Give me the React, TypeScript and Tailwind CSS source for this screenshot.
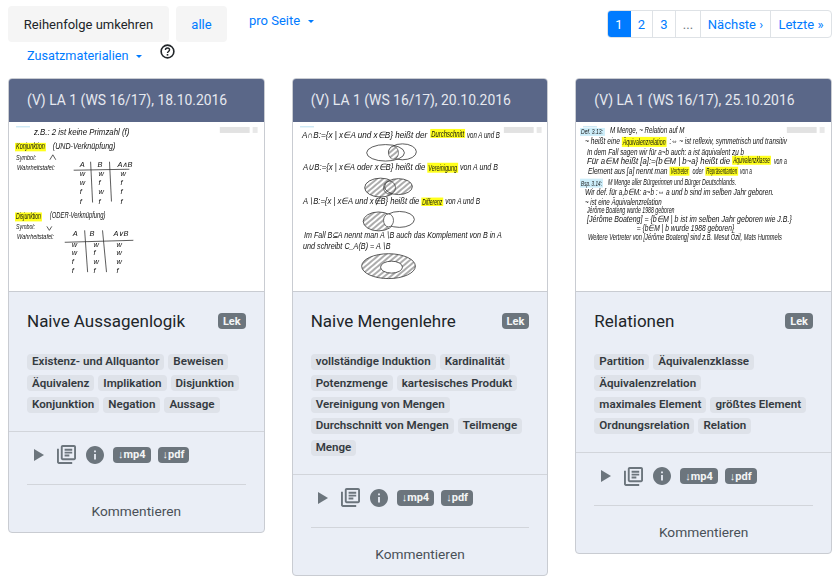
import React from 'react';

const Hand = ({ x, y, w, size = 9, children }: { x: number; y: number; w?: number; size?: number; children: React.ReactNode }) => (
  <text
    x={x}
    y={y}
    fontSize={size}
    fontStyle="italic"
    fontFamily="'Liberation Sans', sans-serif"
    fill="#111"
    textLength={w}
    lengthAdjust={w ? 'spacingAndGlyphs' : undefined}
  >
    {children}
  </text>
);

const Mark = ({ x, y, w, h, fill = '#ffff1a' }: { x: number; y: number; w: number; h: number; fill?: string }) => (
  <rect x={x} y={y} width={w} height={h} fill={fill} />
);

const WindowBar = ({ x = 212 }: { x?: number }) => (
  <g>
    <rect x={x} y={5} width={30} height={6} fill="#e2e2e2" />
    <rect x={x + 33} y={5} width={5} height={6} fill="#e8e8e8" />
    <rect x={7} y={4} width={14} height={1.5} fill="#cfe9f5" />
  </g>
);

const Rows = ({ cols, ys, rows }: { cols: number[]; ys: number[]; rows: string[][] }) => (
  <g>
    {rows.map((r, i) =>
      r.map((c, j) => (
        <Hand key={`${i}-${j}`} x={cols[j]} y={ys[i]} size={7.500}>
          {c}
        </Hand>
      )),
    )}
  </g>
);

const Thumb1 = () => (
  <>
    <Hand x={25} y={13} w={96}>z.B.: 2 ist keine Primzahl (f)</Hand>
    <Mark x={6} y={21} w={31} h={8.500} />
    <Hand x={7} y={27.500} w={29}>Konjunktion</Hand>
    <Hand x={44} y={27} w={63}>(UND-Verknüpfung)</Hand>
    <Hand x={7} y={38} w={20} size={8}>Symbol:</Hand>
    <path d="M41 38l3-5 3 5" stroke="#333" fill="none" strokeWidth="0.8" />
    <Hand x={8} y={48} w={38} size={8}>Wahrheitstafel:</Hand>
    <Rows cols={[71, 89, 109]} ys={[45]} rows={[['A', 'B', 'A∧B']]} />
    <path d="M65 48.500L121 47.500M82 40L84 81M101 40L103 80" stroke="#333" strokeWidth="0.8" fill="none" />
    <Rows
      cols={[71, 90, 112]}
      ys={[54, 63, 72, 82]}
      rows={[['w', 'w', 'w'], ['w', 'f', 'f'], ['f', 'w', 'f'], ['f', 'f', 'f']]}
    />
    <Mark x={6} y={91} w={27} h={9} />
    <Hand x={7} y={98} w={25}>Disjunktion</Hand>
    <Hand x={41} y={97} w={56}>(ODER-Verknüpfung)</Hand>
    <Hand x={7} y={108} w={19} size={8}>Symbol:</Hand>
    <path d="M38 105l2.500 4 2.500-4" stroke="#333" fill="none" strokeWidth="0.8" />
    <Hand x={8} y={118} w={37} size={8}>Wahrheitstafel:</Hand>
    <Rows cols={[64, 81, 105]} ys={[115]} rows={[['A', 'B', 'A∨B']]} />
    <path d="M56 121L125 119M76 109L79 151M94 109L98 151" stroke="#333" strokeWidth="0.8" fill="none" />
    <Rows
      cols={[63, 85, 108]}
      ys={[126, 134, 143, 152]}
      rows={[['w', 'w', 'w'], ['w', 'f', 'w'], ['f', 'w', 'w'], ['f', 'f', 'f']]}
    />
  </>
);

const Thumb2 = () => (
  <>
    <defs>
      <pattern id="hatch" width="4" height="4" patternUnits="userSpaceOnUse" patternTransform="rotate(-40)">
        <rect width="4" height="4" fill="#fff" />
        <path d="M0 2H4" stroke="#444" strokeWidth="0.9" />
      </pattern>
    </defs>
    <Mark x={138} y={7} w={35} h={9} />
    <Hand x={9} y={16} w={126}>A∩B:={'{'}x | x∈A und x∈B{'}'} heißt der</Hand>
    <Hand x={139} y={15} w={33}>Durchschnitt</Hand>
    <Hand x={175} y={16} w={33}>von A und B</Hand>
    <ellipse cx={93} cy={31} rx={19} ry={8.300} fill="none" stroke="#333" strokeWidth="0.8" />
    <ellipse cx={110} cy={30} rx={14} ry={8} fill="none" stroke="#333" strokeWidth="0.8" />
    <ellipse cx={101} cy={31} rx={5} ry={6.500} fill="url(#hatch)" stroke="#333" strokeWidth="0.6" />
    <Mark x={135} y={41} w={31} h={10} />
    <Hand x={10} y={48} w={123}>A∪B:={'{'}x | x∈A oder x∈B{'}'} heißt die</Hand>
    <Hand x={136} y={49} w={29}>Vereinigung</Hand>
    <Hand x={168} y={48} w={38}>von A und B</Hand>
    <ellipse cx={88} cy={66} rx={16} ry={9.500} fill="url(#hatch)" stroke="#333" strokeWidth="0.8" />
    <ellipse cx={106} cy={65} rx={14} ry={8} fill="url(#hatch)" stroke="#333" strokeWidth="0.8" />
    <ellipse cx={97} cy={66} rx={6} ry={6.500} fill="none" stroke="#333" strokeWidth="0.7" />
    <Mark x={129} y={76} w={22} h={8.500} />
    <Hand x={10} y={82} w={117}>A∖B:={'{'}x | x∈A und x∉B{'}'} heißt die</Hand>
    <Hand x={130} y={83} w={20}>Differenz</Hand>
    <Hand x={153} y={82} w={35}>von A und B</Hand>
    <ellipse cx={86} cy={100} rx={15.500} ry={9.500} fill="url(#hatch)" stroke="#333" strokeWidth="0.8" />
    <ellipse cx={107} cy={98} rx={15} ry={8} fill="#fff" stroke="#333" strokeWidth="0.8" />
    <ellipse cx={96} cy={99} rx={5} ry={6.500} fill="#fff" stroke="#333" strokeWidth="0.7" />
    <Hand x={11} y={117} w={199}>Im Fall B⊆A nennt man A∖B auch das Komplement von B in A</Hand>
    <Hand x={10} y={128} w={88}>und schreibt  C_A(B) = A∖B</Hand>
    <ellipse cx={96} cy={145} rx={27} ry={12.500} fill="url(#hatch)" stroke="#333" strokeWidth="0.8" />
    <ellipse cx={99} cy={146} rx={11} ry={6} fill="#fff" stroke="#333" strokeWidth="0.8" />
  </>
);

const Thumb3 = () => (
  <>
    <Mark x={4} y={6} w={25} h={8} fill="#cdeefa" />
    <Hand x={5} y={12.500} w={22} size={8}>Def. 3.13:</Hand>
    <Hand x={34} y={11} w={75}>M Menge, ~ Relation auf M</Hand>
    <Mark x={46} y={15} w={45} h={10} />
    <Hand x={9} y={22} w={35}>~ heißt eine</Hand>
    <Hand x={47} y={23} w={43}>Äquivalenzrelation</Hand>
    <Hand x={94} y={22} w={118}>:⇔ ~ ist reflexiv, symmetrisch und transitiv</Hand>
    <Hand x={11} y={33} w={158}>In dem Fall sagen wir für a~b auch: a ist äquivalent zu b</Hand>
    <Mark x={157} y={34} w={39} h={9} />
    <Hand x={11} y={42} w={144}>Für a∈M heißt [a]:={'{'}b∈M | b~a{'}'} heißt die</Hand>
    <Hand x={158} y={41} w={37}>Äquivalenzklasse</Hand>
    <Hand x={199} y={42} w={13}>von a</Hand>
    <Mark x={94} y={45} w={20} h={9} />
    <Mark x={130} y={45} w={33} h={9} />
    <Hand x={12} y={52} w={80}>Element aus [a] nennt man</Hand>
    <Hand x={95} y={52} w={18}>Vertreter</Hand>
    <Hand x={117} y={52} w={11}>oder</Hand>
    <Hand x={131} y={52} w={31}>Repräsentanten</Hand>
    <Hand x={165} y={52} w={12}>von a</Hand>
    <Mark x={4} y={57} w={23} h={9} fill="#cdeefa" />
    <Hand x={5} y={64} w={21} size={8}>Bsp. 3.14:</Hand>
    <Hand x={32} y={63} w={129}>M Menge aller Bürgerinnen und Bürger Deutschlands.</Hand>
    <Hand x={9} y={73} w={190}>Wir def. für a,b∈M: a~b :⇔ a und b sind im selben Jahr geboren.</Hand>
    <Hand x={9} y={83} w={77}>~ ist eine Äquivalenzrelation</Hand>
    <Hand x={11} y={92} w={88}>Jérôme Boateng wurde 1988 geboren</Hand>
    <Hand x={11} y={101} w={206}>[Jérôme Boateng] = {'{'}b∈M | b ist im selben Jahr geboren wie J.B.{'}'}</Hand>
    <Hand x={61} y={110} w={98}>= {'{'}b∈M | b wurde 1988 geboren{'}'}</Hand>
    <Hand x={12} y={119} w={195}>Weitere Vertreter von [Jérôme Boateng] sind z.B. Mesut Özil, Mats Hummels</Hand>
  </>
);

const Badge = ({ children }: { children: React.ReactNode }) => (
  <span className="flex h-[16px] items-center rounded-[4px] bg-[#6c757d] px-[5px] text-[11px] leading-none font-bold text-[#f4f5f6]">
    {children}
  </span>
);

const Tag = ({ children }: { children: string }) => (
  <span className="flex h-[16px] items-center rounded-[4px] bg-[#dee2e9] px-[5px] text-[11.6px] leading-none font-semibold whitespace-nowrap text-[#343a40]">
    {children}
  </span>
);

const Card = ({ title, heading, tags, thumb }: { title: string; heading: string; tags: string[]; thumb: React.ReactNode }) => (
  <div className="overflow-hidden rounded-[4px] border border-[#c9ccd2] bg-[#eaeef6]">
    <div className="flex h-[43px] items-center bg-[#5a6788] px-[18px] text-[13.9px] text-[#e6e9f0]">{title}</div>
    <svg viewBox="0 0 256 170" className="block h-[170px] w-full border-b border-[#c9ccd2] bg-white">
      <g filter="url(#soft)">
        {thumb}
        <WindowBar />
      </g>
    </svg>
    <div className="border-b border-[#d2d5db] px-[18px] pt-[18px] pb-[18px]">
      <div className="flex items-start justify-between">
        <h5 className="text-[17px] leading-[22px] text-[#212529]">{heading}</h5>
        <span className="mt-[3px]">
          <Badge>Lek</Badge>
        </span>
      </div>
      <div className="mt-[22px] flex flex-wrap gap-x-[4px] gap-y-[5.4px]">
        {tags.map((t) => (
          <Tag key={t}>{t}</Tag>
        ))}
      </div>
    </div>
    <div className="px-[18px] pt-[14px]">
      <div className="flex h-[18px] items-center text-[#6c757d]">
        <svg viewBox="0 0 10 12" className="ml-[7px] h-[12px] w-[10px]" fill="currentColor">
          <path d="M0 0l10 6-10 6z" />
        </svg>
        <svg viewBox="2 2 20 20" className="ml-[13px] h-[19px] w-[19px]" fill="currentColor">
          <path d="M4 6H2v14c0 1.100.9 2 2 2h14v-2H4V6zm16-4H8c-1.100 0-2 .9-2 2v12c0 1.100.9 2 2 2h12c1.100 0 2-.9 2-2V4c0-1.100-.9-2-2-2zm0 14H8V4h12v12zM10 9h8v2h-8zm0 3h5v2h-5zm0-6h8v2h-8z" />
        </svg>
        <svg viewBox="2 2 20 20" className="ml-[10px] h-[18px] w-[18px]" fill="currentColor">
          <path d="M12 2C6.480 2 2 6.480 2 12s4.480 10 10 10 10-4.480 10-10S17.520 2 12 2zm1 15h-2v-6h2v6zm0-8h-2V7h2v2z" />
        </svg>
        <span className="ml-[9px] flex gap-[7px]">
          <Badge>↓mp4</Badge>
          <Badge>↓pdf</Badge>
        </span>
      </div>
      <div className="mt-[20px] border-t border-[#d2d5db] pt-[16px] pb-[11px] text-center text-[13.7px] leading-[20px] text-[#495057]">
        Kommentieren
      </div>
    </div>
  </div>
);

const Caret = () => (
  <span className="ml-[8px] inline-block h-0 w-0 border-x-[3px] border-t-[3px] border-x-transparent border-t-[#007bff] align-[2px]" />
);

export default function App() {
  return (
    <div className='h-[582px] w-[840px] overflow-hidden bg-white font-["Roboto",sans-serif] text-[13px]'>
      <svg width="0" height="0" className="absolute">
        <filter id="soft">
          <feGaussianBlur stdDeviation="0.4" />
        </filter>
      </svg>

      <div className="flex h-[78px] justify-between px-[8px]">
        <div>
          <div className="flex pt-[6px]">
            <button className="h-[36px] w-[161px] rounded-[4px] bg-[#f5f5f5] pt-[1px] text-[#212529]">Reihenfolge umkehren</button>
            <button className="ml-[7px] h-[36px] w-[51px] rounded-[4px] bg-[#f5f5f5] pt-[1px] text-[#007bff]">alle</button>
            <span className="ml-[22px] pt-[5px] leading-[20px] text-[#007bff]">
              pro Seite
              <Caret />
            </span>
          </div>
          <div className="flex pt-[4px] pl-[19px] text-[12.7px] leading-[20px] text-[#007bff]">
            <span>
              Zusatzmaterialien
              <Caret />
            </span>
            <svg viewBox="0 0 16 16" className="mt-[-2px] ml-[18px] h-[15px] w-[15px] text-[#212529]" fill="none" stroke="currentColor">
              <circle cx="8" cy="8" r="6.800" strokeWidth="1.700" />
              <path d="M5.800 6.300c0-1.300 1-2.100 2.200-2.100s2.200.8 2.200 2c0 1.800-2.200 1.700-2.200 3.300" strokeWidth="1.500" />
              <path d="M8 10.700v1.700" strokeWidth="1.700" />
            </svg>
          </div>
        </div>
        <div className="mt-[10px] flex h-[28px] overflow-hidden rounded-[4px] border border-[#dee2e6] text-[#007bff]">
          <span className="-my-[1px] -ml-[1px] flex w-[24px] items-center justify-center bg-[#007bff] pt-[1px] text-white">1</span>
          <span className="flex w-[22px] items-center justify-center border-r border-[#dee2e6] pt-[1px]">2</span>
          <span className="flex w-[23px] items-center justify-center border-r border-[#dee2e6] pt-[1px]">3</span>
          <span className="flex w-[25px] items-center justify-center border-r border-[#dee2e6] pt-[1px] text-[#6c757d]">...</span>
          <span className="flex w-[70px] items-center justify-center border-r border-[#dee2e6] pt-[1px]">Nächste ›</span>
          <span className="flex w-[60px] items-center justify-center pt-[1px]">Letzte »</span>
        </div>
      </div>

      <div className="grid grid-cols-3 items-start gap-[27px] px-[8px]">
        <Card
          title="(V) LA 1 (WS 16/17), 18.10.2016"
          heading="Naive Aussagenlogik"
          tags={['Existenz- und Allquantor', 'Beweisen', 'Äquivalenz', 'Implikation', 'Disjunktion', 'Konjunktion', 'Negation', 'Aussage']}
          thumb={<Thumb1 />}
        />
        <Card
          title="(V) LA 1 (WS 16/17), 20.10.2016"
          heading="Naive Mengenlehre"
          tags={['vollständige Induktion', 'Kardinalität', 'Potenzmenge', 'kartesisches Produkt', 'Vereinigung von Mengen', 'Durchschnitt von Mengen', 'Teilmenge', 'Menge']}
          thumb={<Thumb2 />}
        />
        <Card
          title="(V) LA 1 (WS 16/17), 25.10.2016"
          heading="Relationen"
          tags={['Partition', 'Äquivalenzklasse', 'Äquivalenzrelation', 'maximales Element', 'größtes Element', 'Ordnungsrelation', 'Relation']}
          thumb={<Thumb3 />}
        />
      </div>
    </div>
  );
}
